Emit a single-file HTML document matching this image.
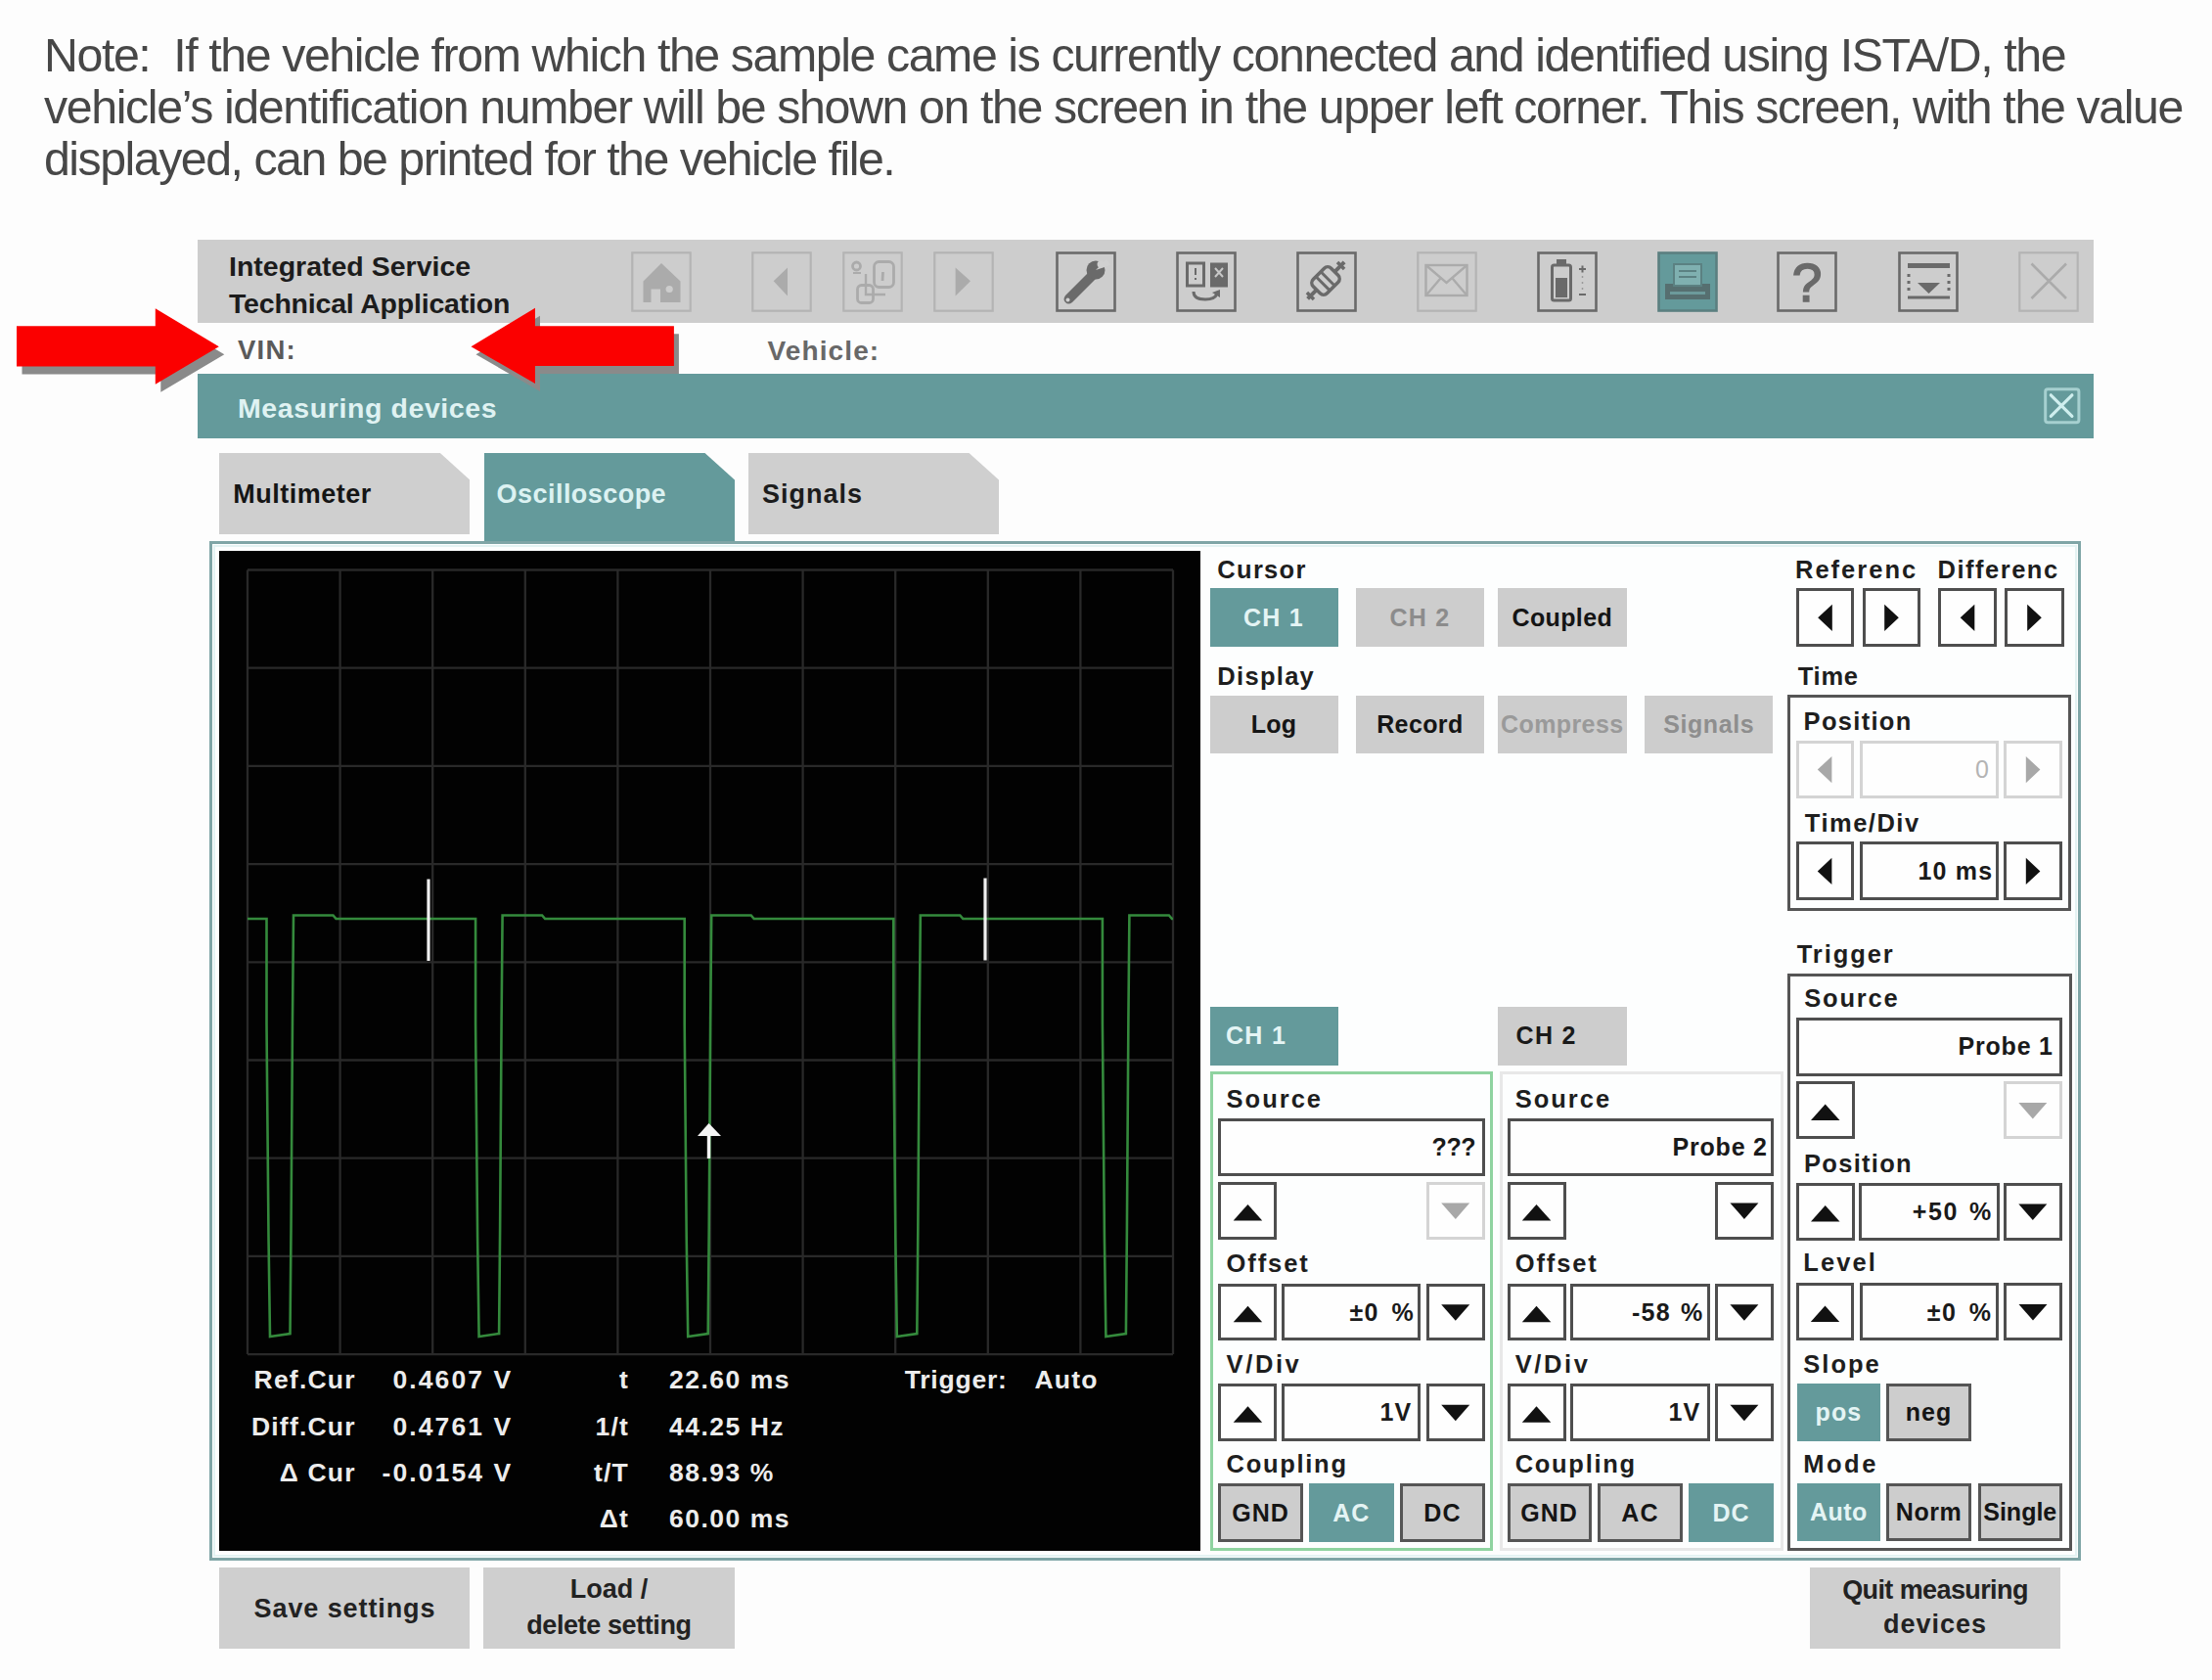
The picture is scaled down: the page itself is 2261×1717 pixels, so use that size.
<!DOCTYPE html>
<html><head><meta charset="utf-8"><title>Measuring devices</title>
<style>
html,body{margin:0;padding:0;}
body{width:2261px;height:1717px;position:relative;overflow:hidden;background:#fdfdfd;font-family:"Liberation Sans", sans-serif;}
.a{position:absolute;}
.t{position:absolute;white-space:nowrap;}
</style></head><body>
<div class="t" style="left:45.0px;top:32.0px;font-size:48.3px;line-height:48.3px;color:#474747;letter-spacing:-1.42px;">Note:&nbsp; If the vehicle from which the sample came is currently connected and identified using ISTA/D, the</div>
<div class="t" style="left:45.0px;top:84.9px;font-size:48.3px;line-height:48.3px;color:#474747;letter-spacing:-1.38px;">vehicle’s identification number will be shown on the screen in the upper left corner. This screen, with the value</div>
<div class="t" style="left:45.0px;top:137.8px;font-size:48.3px;line-height:48.3px;color:#474747;letter-spacing:-1.5px;">displayed, can be printed for the vehicle file.</div>
<div class="a" style="left:202.0px;top:245.0px;width:1938.0px;height:85.0px;background:#cdcdcd;"></div>
<div class="t" style="left:234.0px;top:257.9px;font-size:28.5px;line-height:28.5px;font-weight:bold;color:#1c1c1c;letter-spacing:0px;">Integrated Service</div>
<div class="t" style="left:234.0px;top:295.9px;font-size:28.5px;line-height:28.5px;font-weight:bold;color:#1c1c1c;letter-spacing:-0.2px;">Technical Application</div>
<div class="t" style="left:243.0px;top:344.3px;font-size:27.5px;line-height:27.5px;color:#5a5a5a;font-weight:bold;letter-spacing:1.2px;">VIN:</div>
<div class="t" style="left:784.6px;top:344.8px;font-size:28.0px;line-height:28.0px;color:#686868;font-weight:bold;letter-spacing:1.1px;">Vehicle:</div>
<div class="a" style="left:202.0px;top:381.5px;width:1938.0px;height:66.5px;background:#649a9b;"></div>
<div class="t" style="left:243.0px;top:402.9px;font-size:28.5px;line-height:28.5px;font-weight:bold;color:#dff2f2;letter-spacing:0.6px;">Measuring devices</div>
<svg class="a" style="left:2087px;top:393px" width="42" height="42" viewBox="0 0 42 42"><rect x="3.7" y="4.8" width="34.2" height="34" rx="2.5" fill="none" stroke="#a6d0d0" stroke-width="3"/><path d="M9.3 10.8 L30.9 32.4 M30.9 10.8 L9.3 32.4" stroke="#cfeeee" stroke-width="3.2" stroke-linecap="round"/></svg>
<svg class="a" style="left:645.4px;top:257px" width="62" height="62" viewBox="0 0 62 62"><rect x="1.3" y="1.3" width="59.4" height="59.4" fill="none" stroke="#b4b4b4" stroke-width="2.2"/><path d="M31 12 L12.5 30.5 L12.5 52 L50.5 52 L50.5 30.5 Z" fill="#ababab"/><rect x="20.5" y="38.5" width="9.5" height="13.5" fill="#cdcdcd"/><circle cx="39.2" cy="38.5" r="3.6" fill="#cdcdcd"/></svg>
<svg class="a" style="left:768.3px;top:257px" width="62" height="62" viewBox="0 0 62 62"><rect x="1.3" y="1.3" width="59.4" height="59.4" fill="none" stroke="#b4b4b4" stroke-width="2.2"/><path d="M22.7 30.2 L37 16.6 L37 45.6 Z" fill="#ababab"/></svg>
<svg class="a" style="left:861.1px;top:257px" width="62" height="62" viewBox="0 0 62 62"><rect x="1.3" y="1.3" width="59.4" height="59.4" fill="none" stroke="#b4b4b4" stroke-width="2.2"/><g fill="none" stroke="#ababab" stroke-width="2.8"><rect x="32.5" y="10.5" width="20" height="26" rx="5"/><path d="M41.5 21 L41 30"/><circle cx="14.5" cy="15" r="4"/><path d="M11 22 L19 22" stroke-width="2"/><path d="M24 23 L24 44 L44 44" stroke-width="2.4"/><rect x="15.5" y="34.5" width="16" height="18" rx="4"/></g></svg>
<svg class="a" style="left:953.7px;top:257px" width="62" height="62" viewBox="0 0 62 62"><rect x="1.3" y="1.3" width="59.4" height="59.4" fill="none" stroke="#b4b4b4" stroke-width="2.2"/><path d="M22.6 16.6 L38 30.2 L22.6 45.6 Z" fill="#ababab"/></svg>
<svg class="a" style="left:1078.5px;top:257px" width="62" height="62" viewBox="0 0 62 62"><rect x="1.5" y="1.5" width="59.0" height="59.0" fill="none" stroke="#6a6a6a" stroke-width="2.6"/><g fill="#6a6a6a"><path d="M10 45 L34 21 L41 28 L17 52 Q13 55 10 52 Q7 49 10 45 Z"/><circle cx="41" cy="19" r="9.5"/></g><path d="M41 19 L52 8 L56 14 Z" fill="#d0d0d0"/><circle cx="46" cy="13" r="3.5" fill="#d0d0d0"/><circle cx="12.5" cy="49.5" r="2" fill="#d0d0d0"/></svg>
<svg class="a" style="left:1201.8px;top:257px" width="62" height="62" viewBox="0 0 62 62"><rect x="1.5" y="1.5" width="59.0" height="59.0" fill="none" stroke="#6a6a6a" stroke-width="2.6"/><rect x="11.5" y="12" width="17" height="23" fill="none" stroke="#6a6a6a" stroke-width="3"/><path d="M20 17 L20 24 M20 27 L20 29" stroke="#6a6a6a" stroke-width="2"/><rect x="35" y="11.5" width="18" height="25" fill="#6a6a6a"/><path d="M40 17 L48 26 M48 17 L40 26" stroke="#c8c8c8" stroke-width="2"/><path d="M18 41 Q18 49 30 49 Q40 49 42 43" fill="none" stroke="#6a6a6a" stroke-width="3"/><path d="M37 42 L45 39 L45 47 Z" fill="#6a6a6a"/></svg>
<svg class="a" style="left:1325.3px;top:257px" width="62" height="62" viewBox="0 0 62 62"><rect x="1.5" y="1.5" width="59.0" height="59.0" fill="none" stroke="#6a6a6a" stroke-width="2.6"/><g transform="rotate(-45 30 30)"><rect x="17" y="20" width="26" height="20" rx="5" fill="none" stroke="#6a6a6a" stroke-width="3.5"/><path d="M26 20 L26 40 M33 20 L33 40" stroke="#6a6a6a" stroke-width="3"/><path d="M4 30 L17 30 M43 30 L57 30" stroke="#6a6a6a" stroke-width="4"/><path d="M8 25 L8 35 M52 25 L52 35" stroke="#6a6a6a" stroke-width="3.5"/></g></svg>
<svg class="a" style="left:1448.4px;top:257px" width="62" height="62" viewBox="0 0 62 62"><rect x="1.3" y="1.3" width="59.4" height="59.4" fill="none" stroke="#b4b4b4" stroke-width="2.2"/><g fill="none" stroke="#ababab" stroke-width="2.4"><rect x="9.5" y="14" width="42" height="31"/><path d="M9.5 14 L30.5 32 L51.5 14 M9.5 45 L24 28 M51.5 45 L37 28"/></g></svg>
<svg class="a" style="left:1571.0px;top:257px" width="62" height="62" viewBox="0 0 62 62"><rect x="1.5" y="1.5" width="59.0" height="59.0" fill="none" stroke="#6a6a6a" stroke-width="2.6"/><rect x="15.5" y="14" width="19" height="36" rx="2" fill="none" stroke="#6a6a6a" stroke-width="3"/><rect x="20" y="8" width="10" height="6" fill="#6a6a6a"/><rect x="19" y="27" width="12" height="20" fill="#6a6a6a"/><path d="M43 18 L50 18 M46.5 14.5 L46.5 21.5 M43 44 L50 44" stroke="#6a6a6a" stroke-width="2"/><path d="M46.5 25 L46.5 27 M46.5 31 L46.5 33 M46.5 37 L46.5 39" stroke="#9a9a9a" stroke-width="1.5"/></svg>
<svg class="a" style="left:1693.7px;top:257px" width="62" height="62" viewBox="0 0 62 62"><rect x="1.5" y="1.5" width="59.0" height="59.0" fill="#649a9b" stroke="#5b7f80" stroke-width="2.6"/><rect x="8" y="33" width="46" height="16" fill="#566f70"/><rect x="17" y="13" width="28" height="22" fill="#7fb0b0" stroke="#5b8182" stroke-width="2"/><path d="M22 20 L40 20 M22 26 L40 26" stroke="#5b8182" stroke-width="2"/><rect x="13" y="41" width="36" height="3" fill="#6c9a9b"/></svg>
<svg class="a" style="left:1816.4px;top:257px" width="62" height="62" viewBox="0 0 62 62"><rect x="1.5" y="1.5" width="59.0" height="59.0" fill="none" stroke="#6a6a6a" stroke-width="2.6"/><text x="31" y="51" text-anchor="middle" font-family="Liberation Sans" font-weight="normal" font-size="55" fill="#6a6a6a" stroke="#6a6a6a" stroke-width="1.6">?</text></svg>
<svg class="a" style="left:1939.7px;top:257px" width="62" height="62" viewBox="0 0 62 62"><rect x="1.5" y="1.5" width="59.0" height="59.0" fill="none" stroke="#6a6a6a" stroke-width="2.6"/><rect x="10" y="12" width="43" height="5" fill="#6a6a6a"/><rect x="10" y="45.5" width="43" height="3" fill="#6a6a6a"/><path d="M20 32 L43 32 L31.5 43 Z" fill="#6a6a6a"/><path d="M11 23 L11 41 M52 23 L52 41" stroke="#6a6a6a" stroke-width="3" stroke-dasharray="3 4"/></svg>
<svg class="a" style="left:2062.9px;top:257px" width="62" height="62" viewBox="0 0 62 62"><rect x="1.3" y="1.3" width="59.4" height="59.4" fill="none" stroke="#b4b4b4" stroke-width="2.2"/><path d="M13.5 12.5 L49 48 M49 12.5 L13.5 48" stroke="#ababab" stroke-width="2.6"/></svg>
<svg class="a" style="left:223.6px;top:463.0px" width="256.9" height="83.0"><path d="M0 0 L225.9 0 L256.9 28 L256.9 83.0 L0 83.0 Z" fill="#cfcfcf"/></svg>
<svg class="a" style="left:494.5px;top:463.0px" width="256.5" height="94.0"><path d="M0 0 L225.5 0 L256.5 28 L256.5 94.0 L0 94.0 Z" fill="#649a9b"/></svg>
<svg class="a" style="left:764.5px;top:463.0px" width="256.5" height="83.0"><path d="M0 0 L225.5 0 L256.5 28 L256.5 83.0 L0 83.0 Z" fill="#cfcfcf"/></svg>
<div class="t" style="left:238.2px;top:492.1px;font-size:27.0px;line-height:27.0px;font-weight:bold;color:#151515;letter-spacing:0.5px;">Multimeter</div>
<div class="t" style="left:507.6px;top:492.1px;font-size:27.0px;line-height:27.0px;color:#dcf2f2;font-weight:bold;letter-spacing:0.45px;">Oscilloscope</div>
<div class="t" style="left:779.0px;top:492.1px;font-size:27.0px;line-height:27.0px;font-weight:bold;color:#1c1c1c;letter-spacing:1px;">Signals</div>
<div class="a" style="left:213.8px;top:553.0px;width:1913.2px;height:1042.0px;border:3.8px solid #7fa5a6;box-sizing:border-box;background:#fdfefe;"></div>
<div class="a" style="left:217.5px;top:556.8px;width:1905.7px;height:1034.4px;border:2.5px solid #e4f3f3;box-sizing:border-box;"></div>
<div class="a" style="left:223.6px;top:563.0px;width:1003.4px;height:1021.5px;background:#020202;"></div>
<svg class="a" style="left:0;top:0" width="2261" height="1717"><path d="M253.0 582.5 L253.0 1384.1 M347.6 582.5 L347.6 1384.1 M442.2 582.5 L442.2 1384.1 M536.8 582.5 L536.8 1384.1 M631.4 582.5 L631.4 1384.1 M726.0 582.5 L726.0 1384.1 M820.6 582.5 L820.6 1384.1 M915.2 582.5 L915.2 1384.1 M1009.8 582.5 L1009.8 1384.1 M1104.4 582.5 L1104.4 1384.1 M1199.0 582.5 L1199.0 1384.1 M253.0 582.5 L1199.0 582.5 M253.0 682.7 L1199.0 682.7 M253.0 782.9 L1199.0 782.9 M253.0 883.1 L1199.0 883.1 M253.0 983.3 L1199.0 983.3 M253.0 1083.5 L1199.0 1083.5 M253.0 1183.7 L1199.0 1183.7 M253.0 1283.9 L1199.0 1283.9 M253.0 1384.1 L1199.0 1384.1 " stroke="#292929" stroke-width="2.3" fill="none"/><path d="M253.0 939.0 L272.5 939.0 L272.5 1047.0 L274.5 1264.0 L276.0 1366.0 L296.5 1363.0 L297.5 1257.0 L299.0 1041.0 L300.0 935.5 L340.5 935.5 L343.5 939.0 L486.1 939.0 L486.1 1047.0 L488.1 1264.0 L489.6 1366.0 L510.1 1363.0 L511.1 1257.0 L512.6 1041.0 L513.6 935.5 L554.1 935.5 L557.1 939.0 L699.7 939.0 L699.7 1047.0 L701.7 1264.0 L703.2 1366.0 L723.7 1363.0 L724.7 1257.0 L726.2 1041.0 L727.2 935.5 L767.7 935.5 L770.7 939.0 L913.3 939.0 L913.3 1047.0 L915.3 1264.0 L916.8 1366.0 L937.3 1363.0 L938.3 1257.0 L939.8 1041.0 L940.8 935.5 L981.3 935.5 L984.3 939.0 L1126.9 939.0 L1126.9 1047.0 L1128.9 1264.0 L1130.4 1366.0 L1150.9 1363.0 L1151.9 1257.0 L1153.4 1041.0 L1154.4 935.5 L1194.9 935.5 L1197.9 939.0 L1199.0 939.0" stroke="#348a3c" stroke-width="2.6" fill="none" stroke-linejoin="miter"/><path d="M438 898.5 L438 982 M1007 897.5 L1007 981.5" stroke="#f0f0f0" stroke-width="3.2"/><path d="M724.5 1148 L737 1161 L713 1161 Z" fill="#f4f4f4"/><path d="M724.5 1158 L724.5 1184" stroke="#f4f4f4" stroke-width="3.4"/></svg>
<div class="t" style="right:1897.3px;top:1396.6px;font-size:26.5px;line-height:26.5px;text-align:right;color:#ececec;font-weight:bold;letter-spacing:1.2px;">Ref.Cur</div>
<div class="t" style="right:1897.3px;top:1444.6px;font-size:26.5px;line-height:26.5px;text-align:right;color:#ececec;font-weight:bold;letter-spacing:1.2px;">Diff.Cur</div>
<div class="t" style="right:1897.3px;top:1492.1px;font-size:26.5px;line-height:26.5px;text-align:right;color:#ececec;font-weight:bold;letter-spacing:1.2px;">&Delta; Cur</div>
<div class="t" style="right:1736.7px;top:1396.6px;font-size:26.5px;line-height:26.5px;text-align:right;color:#ececec;font-weight:bold;letter-spacing:1.2px;letter-spacing:2.1px;">0.4607 V</div>
<div class="t" style="right:1736.7px;top:1444.6px;font-size:26.5px;line-height:26.5px;text-align:right;color:#ececec;font-weight:bold;letter-spacing:1.2px;letter-spacing:2.1px;">0.4761 V</div>
<div class="t" style="right:1736.7px;top:1492.1px;font-size:26.5px;line-height:26.5px;text-align:right;color:#ececec;font-weight:bold;letter-spacing:1.2px;letter-spacing:2.1px;">-0.0154 V</div>
<div class="t" style="right:1618.0px;top:1396.6px;font-size:26.5px;line-height:26.5px;text-align:right;color:#ececec;font-weight:bold;letter-spacing:1.2px;">t</div>
<div class="t" style="right:1618.0px;top:1444.6px;font-size:26.5px;line-height:26.5px;text-align:right;color:#ececec;font-weight:bold;letter-spacing:1.2px;">1/t</div>
<div class="t" style="right:1618.0px;top:1492.1px;font-size:26.5px;line-height:26.5px;text-align:right;color:#ececec;font-weight:bold;letter-spacing:1.2px;">t/T</div>
<div class="t" style="right:1618.0px;top:1538.6px;font-size:26.5px;line-height:26.5px;text-align:right;color:#ececec;font-weight:bold;letter-spacing:1.2px;">&Delta;t</div>
<div class="t" style="left:684.0px;top:1396.6px;font-size:26.5px;line-height:26.5px;color:#ececec;font-weight:bold;letter-spacing:1.2px;letter-spacing:1.5px;">22.60 ms</div>
<div class="t" style="left:684.0px;top:1444.6px;font-size:26.5px;line-height:26.5px;color:#ececec;font-weight:bold;letter-spacing:1.2px;letter-spacing:1.5px;">44.25 Hz</div>
<div class="t" style="left:684.0px;top:1492.1px;font-size:26.5px;line-height:26.5px;color:#ececec;font-weight:bold;letter-spacing:1.2px;letter-spacing:1.5px;">88.93 %</div>
<div class="t" style="left:684.0px;top:1538.6px;font-size:26.5px;line-height:26.5px;color:#ececec;font-weight:bold;letter-spacing:1.2px;letter-spacing:1.5px;">60.00 ms</div>
<div class="t" style="left:924.7px;top:1396.6px;font-size:26.5px;line-height:26.5px;color:#ececec;font-weight:bold;letter-spacing:1.2px;letter-spacing:0.8px;">Trigger:</div>
<div class="t" style="left:1057.5px;top:1396.6px;font-size:26.5px;line-height:26.5px;color:#ececec;font-weight:bold;letter-spacing:1.2px;">Auto</div>
<div class="t" style="left:1244.3px;top:569.8px;font-size:25.5px;line-height:25.5px;font-weight:bold;color:#1e1e1e;letter-spacing:1.3px;letter-spacing:1.3px;">Cursor</div>
<div class="a" style="left:1236.5px;top:601.0px;width:131.0px;height:60.0px;background:#649a9b;"></div>
<div class="t" style="left:1216.5px;width:171.0px;top:618.8px;font-size:25.0px;line-height:25.0px;text-align:center;font-weight:bold;color:#e4f4f4;letter-spacing:1.2px;">CH 1</div>
<div class="a" style="left:1385.5px;top:601.0px;width:131.8px;height:60.0px;background:#cdcdcd;"></div>
<div class="t" style="left:1365.5px;width:171.8px;top:618.8px;font-size:25.0px;line-height:25.0px;text-align:center;font-weight:bold;color:#8c8c8c;letter-spacing:1.2px;">CH 2</div>
<div class="a" style="left:1531.0px;top:601.0px;width:131.6px;height:60.0px;background:#cdcdcd;"></div>
<div class="t" style="left:1511.0px;width:171.6px;top:618.8px;font-size:25.0px;line-height:25.0px;text-align:center;font-weight:bold;color:#151515;letter-spacing:0.35px;">Coupled</div>
<div class="t" style="left:1244.3px;top:679.4px;font-size:25.5px;line-height:25.5px;font-weight:bold;color:#1e1e1e;letter-spacing:1.3px;letter-spacing:1.3px;">Display</div>
<div class="a" style="left:1236.5px;top:711.3px;width:131.0px;height:58.5px;background:#cdcdcd;"></div>
<div class="t" style="left:1216.5px;width:171.0px;top:728.3px;font-size:25.0px;line-height:25.0px;text-align:center;font-weight:bold;color:#151515;letter-spacing:0.2px;">Log</div>
<div class="a" style="left:1385.5px;top:711.3px;width:131.8px;height:58.5px;background:#cdcdcd;"></div>
<div class="t" style="left:1365.5px;width:171.8px;top:728.3px;font-size:25.0px;line-height:25.0px;text-align:center;font-weight:bold;color:#151515;letter-spacing:0.4px;">Record</div>
<div class="a" style="left:1531.0px;top:711.3px;width:131.6px;height:58.5px;background:#cdcdcd;"></div>
<div class="t" style="left:1511.0px;width:171.6px;top:728.3px;font-size:25.0px;line-height:25.0px;text-align:center;font-weight:bold;color:#9a9a9a;letter-spacing:0.4px;">Compress</div>
<div class="a" style="left:1681.0px;top:711.3px;width:131.4px;height:58.5px;background:#cdcdcd;"></div>
<div class="t" style="left:1661.0px;width:171.4px;top:728.3px;font-size:25.0px;line-height:25.0px;text-align:center;font-weight:bold;color:#8e8e8e;letter-spacing:0.6px;">Signals</div>
<div class="t" style="left:1835.0px;top:570.2px;font-size:25.5px;line-height:25.5px;font-weight:bold;color:#1e1e1e;letter-spacing:1.3px;letter-spacing:2px;">Referenc</div>
<div class="t" style="left:1980.6px;top:570.2px;font-size:25.5px;line-height:25.5px;font-weight:bold;color:#1e1e1e;letter-spacing:1.3px;letter-spacing:1.5px;">Differenc</div>
<div class="a" style="left:1835.5px;top:600.6px;width:59.9px;height:60.4px;background:#fefefe;border:3px solid #4e4e4e;box-sizing:border-box;"></div>
<div class="a" style="left:1904.0px;top:600.6px;width:59.0px;height:60.4px;background:#fefefe;border:3px solid #4e4e4e;box-sizing:border-box;"></div>
<div class="a" style="left:1981.0px;top:600.6px;width:60.0px;height:60.4px;background:#fefefe;border:3px solid #4e4e4e;box-sizing:border-box;"></div>
<div class="a" style="left:2049.0px;top:600.6px;width:61.0px;height:60.4px;background:#fefefe;border:3px solid #4e4e4e;box-sizing:border-box;"></div>
<div class="t" style="left:1837.8px;top:679.2px;font-size:25.5px;line-height:25.5px;font-weight:bold;color:#1e1e1e;letter-spacing:1.3px;letter-spacing:0.7px;">Time</div>
<div class="a" style="left:1827.4px;top:710.0px;width:290.1px;height:220.6px;border:3px solid #555;box-sizing:border-box;"></div>
<div class="t" style="left:1843.6px;top:725.2px;font-size:25.5px;line-height:25.5px;font-weight:bold;color:#1e1e1e;letter-spacing:1.3px;letter-spacing:1.3px;">Position</div>
<div class="a" style="left:1835.5px;top:756.5px;width:59.2px;height:59.2px;background:#fefefe;border:3px solid #d4d4d4;box-sizing:border-box;"></div>
<div class="a" style="left:1900.5px;top:756.5px;width:142.5px;height:59.2px;background:#fefefe;border:3px solid #d4d4d4;box-sizing:border-box;"></div>
<div class="t" style="right:228.2px;top:773.9px;font-size:25.0px;line-height:25.0px;text-align:right;font-weight:normal;color:#b4b4b4;letter-spacing:0px;">0</div>
<div class="a" style="left:2047.9px;top:756.5px;width:60.3px;height:59.2px;background:#fefefe;border:3px solid #d4d4d4;box-sizing:border-box;"></div>
<div class="t" style="left:1844.8px;top:828.9px;font-size:25.5px;line-height:25.5px;font-weight:bold;color:#1e1e1e;letter-spacing:1.3px;letter-spacing:1.5px;">Time/Div</div>
<div class="a" style="left:1835.5px;top:859.8px;width:59.2px;height:60.2px;background:#fefefe;border:3px solid #4e4e4e;box-sizing:border-box;"></div>
<div class="a" style="left:1900.5px;top:859.8px;width:142.5px;height:60.2px;background:#fefefe;border:3px solid #4e4e4e;box-sizing:border-box;"></div>
<div class="t" style="right:223.6px;top:877.7px;font-size:25.0px;line-height:25.0px;text-align:right;font-weight:bold;color:#1a1a1a;letter-spacing:1.2px;">10 ms</div>
<div class="a" style="left:2047.9px;top:859.8px;width:60.3px;height:60.2px;background:#fefefe;border:3px solid #4e4e4e;box-sizing:border-box;"></div>
<div class="t" style="left:1836.8px;top:963.4px;font-size:25.5px;line-height:25.5px;font-weight:bold;color:#1e1e1e;letter-spacing:1.3px;letter-spacing:1.9px;">Trigger</div>
<div class="a" style="left:1827.0px;top:994.6px;width:290.5px;height:590.9px;border:3px solid #555;box-sizing:border-box;"></div>
<div class="t" style="left:1844.3px;top:1008.4px;font-size:25.5px;line-height:25.5px;font-weight:bold;color:#1e1e1e;letter-spacing:1.3px;letter-spacing:1.8px;">Source</div>
<div class="a" style="left:1835.7px;top:1039.6px;width:272.1px;height:60.0px;background:#fefefe;border:3px solid #4e4e4e;box-sizing:border-box;"></div>
<div class="t" style="right:162.2px;top:1057.4px;font-size:25.0px;line-height:25.0px;text-align:right;font-weight:bold;color:#1a1a1a;letter-spacing:0.8px;">Probe 1</div>
<div class="a" style="left:1835.7px;top:1105.4px;width:60.0px;height:58.9px;background:#fefefe;border:3px solid #4e4e4e;box-sizing:border-box;"></div>
<div class="a" style="left:2047.8px;top:1105.4px;width:60.0px;height:58.9px;background:#fefefe;border:3px solid #d4d4d4;box-sizing:border-box;"></div>
<div class="t" style="left:1844.0px;top:1177.4px;font-size:25.5px;line-height:25.5px;font-weight:bold;color:#1e1e1e;letter-spacing:1.3px;letter-spacing:1.3px;">Position</div>
<div class="a" style="left:1835.7px;top:1209.0px;width:60.0px;height:58.8px;background:#fefefe;border:3px solid #4e4e4e;box-sizing:border-box;"></div>
<div class="a" style="left:1900.0px;top:1209.0px;width:143.6px;height:58.8px;background:#fefefe;border:3px solid #4e4e4e;box-sizing:border-box;"></div>
<div class="t" style="right:224.2px;top:1226.2px;font-size:25.0px;line-height:25.0px;text-align:right;font-weight:bold;color:#1a1a1a;letter-spacing:1.6px;word-spacing:2.5px;">+50 %</div>
<div class="a" style="left:2047.8px;top:1209.0px;width:60.0px;height:58.8px;background:#fefefe;border:3px solid #4e4e4e;box-sizing:border-box;"></div>
<div class="t" style="left:1843.3px;top:1278.4px;font-size:25.5px;line-height:25.5px;font-weight:bold;color:#1e1e1e;letter-spacing:1.3px;letter-spacing:2.1px;">Level</div>
<div class="a" style="left:1835.7px;top:1311.4px;width:59.6px;height:59.1px;background:#fefefe;border:3px solid #4e4e4e;box-sizing:border-box;"></div>
<div class="a" style="left:1900.5px;top:1311.4px;width:142.3px;height:59.1px;background:#fefefe;border:3px solid #4e4e4e;box-sizing:border-box;"></div>
<div class="t" style="right:224.4px;top:1328.7px;font-size:25.0px;line-height:25.0px;text-align:right;font-weight:bold;color:#1a1a1a;letter-spacing:1.5px;word-spacing:4px;">&plusmn;0 %</div>
<div class="a" style="left:2048.0px;top:1311.4px;width:60.0px;height:59.1px;background:#fefefe;border:3px solid #4e4e4e;box-sizing:border-box;"></div>
<div class="t" style="left:1843.3px;top:1382.2px;font-size:25.5px;line-height:25.5px;font-weight:bold;color:#1e1e1e;letter-spacing:1.3px;letter-spacing:2px;">Slope</div>
<div class="a" style="left:1836.7px;top:1414.3px;width:85.3px;height:58.5px;background:#649a9b;"></div>
<div class="t" style="left:1816.7px;width:125.3px;top:1431.3px;font-size:25.0px;line-height:25.0px;text-align:center;font-weight:bold;color:#e4f4f4;letter-spacing:1px;">pos</div>
<div class="a" style="left:1928.0px;top:1414.3px;width:87.0px;height:58.5px;background:#cdcdcd;border:3px solid #555;box-sizing:border-box;"></div>
<div class="t" style="left:1908.0px;width:127.0px;top:1431.3px;font-size:25.0px;line-height:25.0px;text-align:center;font-weight:bold;color:#151515;letter-spacing:1px;">neg</div>
<div class="t" style="left:1843.3px;top:1484.2px;font-size:25.5px;line-height:25.5px;font-weight:bold;color:#1e1e1e;letter-spacing:1.3px;letter-spacing:2.5px;">Mode</div>
<div class="a" style="left:1836.7px;top:1516.0px;width:85.3px;height:59.3px;background:#649a9b;"></div>
<div class="t" style="left:1816.7px;width:125.3px;top:1533.4px;font-size:25.0px;line-height:25.0px;text-align:center;font-weight:bold;color:#e4f4f4;letter-spacing:0.5px;">Auto</div>
<div class="a" style="left:1928.0px;top:1516.0px;width:87.0px;height:59.3px;background:#cdcdcd;border:3px solid #555;box-sizing:border-box;"></div>
<div class="t" style="left:1908.0px;width:127.0px;top:1533.4px;font-size:25.0px;line-height:25.0px;text-align:center;font-weight:bold;color:#151515;letter-spacing:0.5px;">Norm</div>
<div class="a" style="left:2021.5px;top:1516.0px;width:86.5px;height:59.3px;background:#cdcdcd;border:3px solid #555;box-sizing:border-box;"></div>
<div class="t" style="left:2001.5px;width:126.5px;top:1533.4px;font-size:25.0px;line-height:25.0px;text-align:center;font-weight:bold;color:#151515;letter-spacing:0px;">Single</div>
<div class="a" style="left:1236.5px;top:1029.3px;width:131.0px;height:59.3px;background:#649a9b;"></div>
<div class="t" style="left:1253.0px;top:1046.3px;font-size:25.0px;line-height:25.0px;font-weight:bold;color:#e4f4f4;letter-spacing:1.3px;">CH 1</div>
<div class="a" style="left:1531.0px;top:1029.3px;width:131.6px;height:59.3px;background:#cdcdcd;"></div>
<div class="t" style="left:1549.6px;top:1046.3px;font-size:25.0px;line-height:25.0px;font-weight:bold;color:#1a1a1a;letter-spacing:1.3px;">CH 2</div>
<div class="a" style="left:1236.5px;top:1094.5px;width:289.5px;height:490.5px;border:3px solid #8fd3a0;box-sizing:border-box;"></div>
<div class="a" style="left:1533.0px;top:1094.5px;width:290.0px;height:490.5px;border:3px solid #e8e8e8;box-sizing:border-box;"></div>
<div class="t" style="left:1253.6px;top:1111.1px;font-size:25.5px;line-height:25.5px;font-weight:bold;color:#1e1e1e;letter-spacing:1.3px;letter-spacing:2px;">Source</div>
<div class="a" style="left:1245.4px;top:1143.0px;width:272.4px;height:58.7px;background:#fefefe;border:3px solid #4e4e4e;box-sizing:border-box;"></div>
<div class="t" style="right:752.8px;top:1160.1px;font-size:25.0px;line-height:25.0px;text-align:right;font-weight:bold;color:#1a1a1a;letter-spacing:-0.4px;">???</div>
<div class="a" style="left:1245.4px;top:1208.0px;width:60.1px;height:58.5px;background:#fefefe;border:3px solid #4e4e4e;box-sizing:border-box;"></div>
<div class="a" style="left:1457.7px;top:1208.0px;width:60.1px;height:58.5px;background:#fefefe;border:3px solid #d4d4d4;box-sizing:border-box;"></div>
<div class="t" style="left:1253.6px;top:1279.1px;font-size:25.5px;line-height:25.5px;font-weight:bold;color:#1e1e1e;letter-spacing:1.3px;letter-spacing:1.9px;">Offset</div>
<div class="a" style="left:1245.4px;top:1311.7px;width:60.1px;height:58.8px;background:#fefefe;border:3px solid #4e4e4e;box-sizing:border-box;"></div>
<div class="a" style="left:1309.6px;top:1311.7px;width:142.9px;height:58.8px;background:#fefefe;border:3px solid #4e4e4e;box-sizing:border-box;"></div>
<div class="t" style="right:814.8px;top:1328.9px;font-size:25.0px;line-height:25.0px;text-align:right;font-weight:bold;color:#1a1a1a;letter-spacing:1.5px;word-spacing:4px;">&plusmn;0 %</div>
<div class="a" style="left:1457.7px;top:1311.7px;width:60.1px;height:58.8px;background:#fefefe;border:3px solid #4e4e4e;box-sizing:border-box;"></div>
<div class="t" style="left:1253.6px;top:1382.4px;font-size:25.5px;line-height:25.5px;font-weight:bold;color:#1e1e1e;letter-spacing:1.3px;letter-spacing:2.6px;">V/Div</div>
<div class="a" style="left:1245.4px;top:1414.3px;width:60.1px;height:58.7px;background:#fefefe;border:3px solid #4e4e4e;box-sizing:border-box;"></div>
<div class="a" style="left:1309.6px;top:1414.3px;width:142.9px;height:58.7px;background:#fefefe;border:3px solid #4e4e4e;box-sizing:border-box;"></div>
<div class="t" style="right:817.6px;top:1431.4px;font-size:25.0px;line-height:25.0px;text-align:right;font-weight:bold;color:#1a1a1a;letter-spacing:1.2px;">1V</div>
<div class="a" style="left:1457.7px;top:1414.3px;width:60.1px;height:58.7px;background:#fefefe;border:3px solid #4e4e4e;box-sizing:border-box;"></div>
<div class="t" style="left:1253.6px;top:1484.4px;font-size:25.5px;line-height:25.5px;font-weight:bold;color:#1e1e1e;letter-spacing:1.3px;letter-spacing:1.7px;">Coupling</div>
<div class="a" style="left:1245.4px;top:1515.8px;width:86.3px;height:59.8px;background:#cdcdcd;border:3px solid #555;box-sizing:border-box;"></div>
<div class="t" style="left:1225.4px;width:126.3px;top:1533.5px;font-size:25.0px;line-height:25.0px;text-align:center;font-weight:bold;color:#151515;letter-spacing:1px;">GND</div>
<div class="a" style="left:1338.0px;top:1515.8px;width:86.6px;height:59.8px;background:#649a9b;"></div>
<div class="t" style="left:1318.0px;width:126.6px;top:1533.5px;font-size:25.0px;line-height:25.0px;text-align:center;font-weight:bold;color:#e4f4f4;letter-spacing:1px;">AC</div>
<div class="a" style="left:1431.0px;top:1515.8px;width:86.8px;height:59.8px;background:#cdcdcd;border:3px solid #555;box-sizing:border-box;"></div>
<div class="t" style="left:1411.0px;width:126.8px;top:1533.5px;font-size:25.0px;line-height:25.0px;text-align:center;font-weight:bold;color:#151515;letter-spacing:1px;">DC</div>
<div class="t" style="left:1548.7px;top:1111.1px;font-size:25.5px;line-height:25.5px;font-weight:bold;color:#1e1e1e;letter-spacing:1.3px;letter-spacing:2px;">Source</div>
<div class="a" style="left:1540.5px;top:1143.0px;width:272.4px;height:58.7px;background:#fefefe;border:3px solid #4e4e4e;box-sizing:border-box;"></div>
<div class="t" style="right:454.2px;top:1160.1px;font-size:25.0px;line-height:25.0px;text-align:right;font-weight:bold;color:#1a1a1a;letter-spacing:0.8px;">Probe 2</div>
<div class="a" style="left:1540.5px;top:1208.0px;width:60.1px;height:58.5px;background:#fefefe;border:3px solid #4e4e4e;box-sizing:border-box;"></div>
<div class="a" style="left:1752.8px;top:1208.0px;width:60.1px;height:58.5px;background:#fefefe;border:3px solid #4e4e4e;box-sizing:border-box;"></div>
<div class="t" style="left:1548.7px;top:1279.1px;font-size:25.5px;line-height:25.5px;font-weight:bold;color:#1e1e1e;letter-spacing:1.3px;letter-spacing:1.9px;">Offset</div>
<div class="a" style="left:1540.5px;top:1311.7px;width:60.1px;height:58.8px;background:#fefefe;border:3px solid #4e4e4e;box-sizing:border-box;"></div>
<div class="a" style="left:1604.7px;top:1311.7px;width:142.9px;height:58.8px;background:#fefefe;border:3px solid #4e4e4e;box-sizing:border-box;"></div>
<div class="t" style="right:519.7px;top:1328.9px;font-size:25.0px;line-height:25.0px;text-align:right;font-weight:bold;color:#1a1a1a;letter-spacing:1.2px;word-spacing:2px;">-58 %</div>
<div class="a" style="left:1752.8px;top:1311.7px;width:60.1px;height:58.8px;background:#fefefe;border:3px solid #4e4e4e;box-sizing:border-box;"></div>
<div class="t" style="left:1548.7px;top:1382.4px;font-size:25.5px;line-height:25.5px;font-weight:bold;color:#1e1e1e;letter-spacing:1.3px;letter-spacing:2.6px;">V/Div</div>
<div class="a" style="left:1540.5px;top:1414.3px;width:60.1px;height:58.7px;background:#fefefe;border:3px solid #4e4e4e;box-sizing:border-box;"></div>
<div class="a" style="left:1604.7px;top:1414.3px;width:142.9px;height:58.7px;background:#fefefe;border:3px solid #4e4e4e;box-sizing:border-box;"></div>
<div class="t" style="right:522.5px;top:1431.4px;font-size:25.0px;line-height:25.0px;text-align:right;font-weight:bold;color:#1a1a1a;letter-spacing:1.2px;">1V</div>
<div class="a" style="left:1752.8px;top:1414.3px;width:60.1px;height:58.7px;background:#fefefe;border:3px solid #4e4e4e;box-sizing:border-box;"></div>
<div class="t" style="left:1548.7px;top:1484.4px;font-size:25.5px;line-height:25.5px;font-weight:bold;color:#1e1e1e;letter-spacing:1.3px;letter-spacing:1.7px;">Coupling</div>
<div class="a" style="left:1540.5px;top:1515.8px;width:86.3px;height:59.8px;background:#cdcdcd;border:3px solid #555;box-sizing:border-box;"></div>
<div class="t" style="left:1520.5px;width:126.3px;top:1533.5px;font-size:25.0px;line-height:25.0px;text-align:center;font-weight:bold;color:#151515;letter-spacing:1px;">GND</div>
<div class="a" style="left:1633.1px;top:1515.8px;width:86.6px;height:59.8px;background:#cdcdcd;border:3px solid #555;box-sizing:border-box;"></div>
<div class="t" style="left:1613.1px;width:126.6px;top:1533.5px;font-size:25.0px;line-height:25.0px;text-align:center;font-weight:bold;color:#151515;letter-spacing:1px;">AC</div>
<div class="a" style="left:1726.1px;top:1515.8px;width:86.8px;height:59.8px;background:#649a9b;"></div>
<div class="t" style="left:1706.1px;width:126.8px;top:1533.5px;font-size:25.0px;line-height:25.0px;text-align:center;font-weight:bold;color:#e4f4f4;letter-spacing:1px;">DC</div>
<svg class="a" style="left:0;top:0" width="2261" height="1717"><path d="M1872.8 617.7 L1872.8 644.9 L1858.2 631.3 Z" fill="#111"/><path d="M1926.2 617.7 L1926.2 644.9 L1940.8 631.3 Z" fill="#111"/><path d="M2018.3 617.7 L2018.3 644.9 L2003.7 631.3 Z" fill="#111"/><path d="M2072.2 617.7 L2072.2 644.9 L2086.8 631.3 Z" fill="#111"/><path d="M1872.4 773.0 L1872.4 800.2 L1857.8 786.6 Z" fill="#a8a8a8"/><path d="M2070.8 773.0 L2070.8 800.2 L2085.4 786.6 Z" fill="#a8a8a8"/><path d="M1872.4 876.8 L1872.4 904.0 L1857.8 890.4 Z" fill="#111"/><path d="M2070.8 876.8 L2070.8 904.0 L2085.4 890.4 Z" fill="#111"/><path d="M1851.0 1145.0 L1880.5 1145.0 L1865.7 1128.5 Z" fill="#111"/><path d="M2063.3 1127.0 L2092.3 1127.0 L2077.8 1143.5 Z" fill="#a8a8a8"/><path d="M1851.0 1248.6 L1880.5 1248.6 L1865.7 1232.1 Z" fill="#111"/><path d="M2063.3 1230.6 L2092.3 1230.6 L2077.8 1247.1 Z" fill="#111"/><path d="M1850.8 1351.1 L1880.2 1351.1 L1865.5 1334.6 Z" fill="#111"/><path d="M2063.5 1333.1 L2092.5 1333.1 L2078.0 1349.6 Z" fill="#111"/><path d="M1260.7 1247.4 L1290.2 1247.4 L1275.5 1230.9 Z" fill="#111"/><path d="M1473.2 1229.4 L1502.2 1229.4 L1487.8 1245.9 Z" fill="#a8a8a8"/><path d="M1260.7 1351.2 L1290.2 1351.2 L1275.5 1334.8 Z" fill="#111"/><path d="M1473.2 1333.2 L1502.2 1333.2 L1487.8 1349.8 Z" fill="#111"/><path d="M1260.7 1453.8 L1290.2 1453.8 L1275.5 1437.3 Z" fill="#111"/><path d="M1473.2 1435.8 L1502.2 1435.8 L1487.8 1452.3 Z" fill="#111"/><path d="M1555.8 1247.4 L1585.3 1247.4 L1570.5 1230.9 Z" fill="#111"/><path d="M1768.4 1229.4 L1797.4 1229.4 L1782.9 1245.9 Z" fill="#111"/><path d="M1555.8 1351.2 L1585.3 1351.2 L1570.5 1334.8 Z" fill="#111"/><path d="M1768.4 1333.2 L1797.4 1333.2 L1782.9 1349.8 Z" fill="#111"/><path d="M1555.8 1453.8 L1585.3 1453.8 L1570.5 1437.3 Z" fill="#111"/><path d="M1768.4 1435.8 L1797.4 1435.8 L1782.9 1452.3 Z" fill="#111"/></svg>
<div class="a" style="left:224.1px;top:1601.5px;width:256.4px;height:83.9px;background:#cfcfcf;"></div>
<div class="t" style="left:202.5px;width:300.0px;top:1631.1px;font-size:27.0px;line-height:27.0px;text-align:center;font-weight:bold;color:#222;letter-spacing:0.9px;">Save settings</div>
<div class="a" style="left:494.2px;top:1601.5px;width:256.4px;height:83.9px;background:#cfcfcf;"></div>
<div class="t" style="left:472.4px;width:300.0px;top:1611.3px;font-size:27.0px;line-height:27.0px;text-align:center;font-weight:bold;color:#222;">Load /</div>
<div class="t" style="left:472.4px;width:300.0px;top:1648.1px;font-size:27.0px;line-height:27.0px;text-align:center;font-weight:bold;color:#222;letter-spacing:-0.4px;">delete setting</div>
<div class="a" style="left:1850.0px;top:1601.5px;width:256.0px;height:83.8px;background:#cfcfcf;"></div>
<div class="t" style="left:1828.0px;width:300.0px;top:1612.4px;font-size:27.0px;line-height:27.0px;text-align:center;font-weight:bold;color:#222;letter-spacing:-0.6px;">Quit measuring</div>
<div class="t" style="left:1828.0px;width:300.0px;top:1647.1px;font-size:27.0px;line-height:27.0px;text-align:center;font-weight:bold;color:#222;letter-spacing:1px;">devices</div>
<svg class="a" style="left:0;top:0" width="2261" height="1717"><path d="M22.5 341.3 L164.3 341.3 L164.3 323.3 L229.3 362.2 L164.3 400.7 L164.3 382.6 L22.5 382.6 Z" fill="#8a8a8a"/><path d="M486.5 362.2 L552.0 322.7 L552.0 341.3 L693.9 341.3 L693.9 382.0 L552.0 382.0 L552.0 400.1 Z" fill="#8a8a8a"/><path d="M17.0 333.3 L158.8 333.3 L158.8 315.3 L223.8 354.2 L158.8 392.7 L158.8 374.6 L17.0 374.6 Z" fill="#fb0000"/><path d="M481.5 354.2 L547.0 314.7 L547.0 333.3 L688.9 333.3 L688.9 374.0 L547.0 374.0 L547.0 392.1 Z" fill="#fb0000"/></svg>
</body></html>
